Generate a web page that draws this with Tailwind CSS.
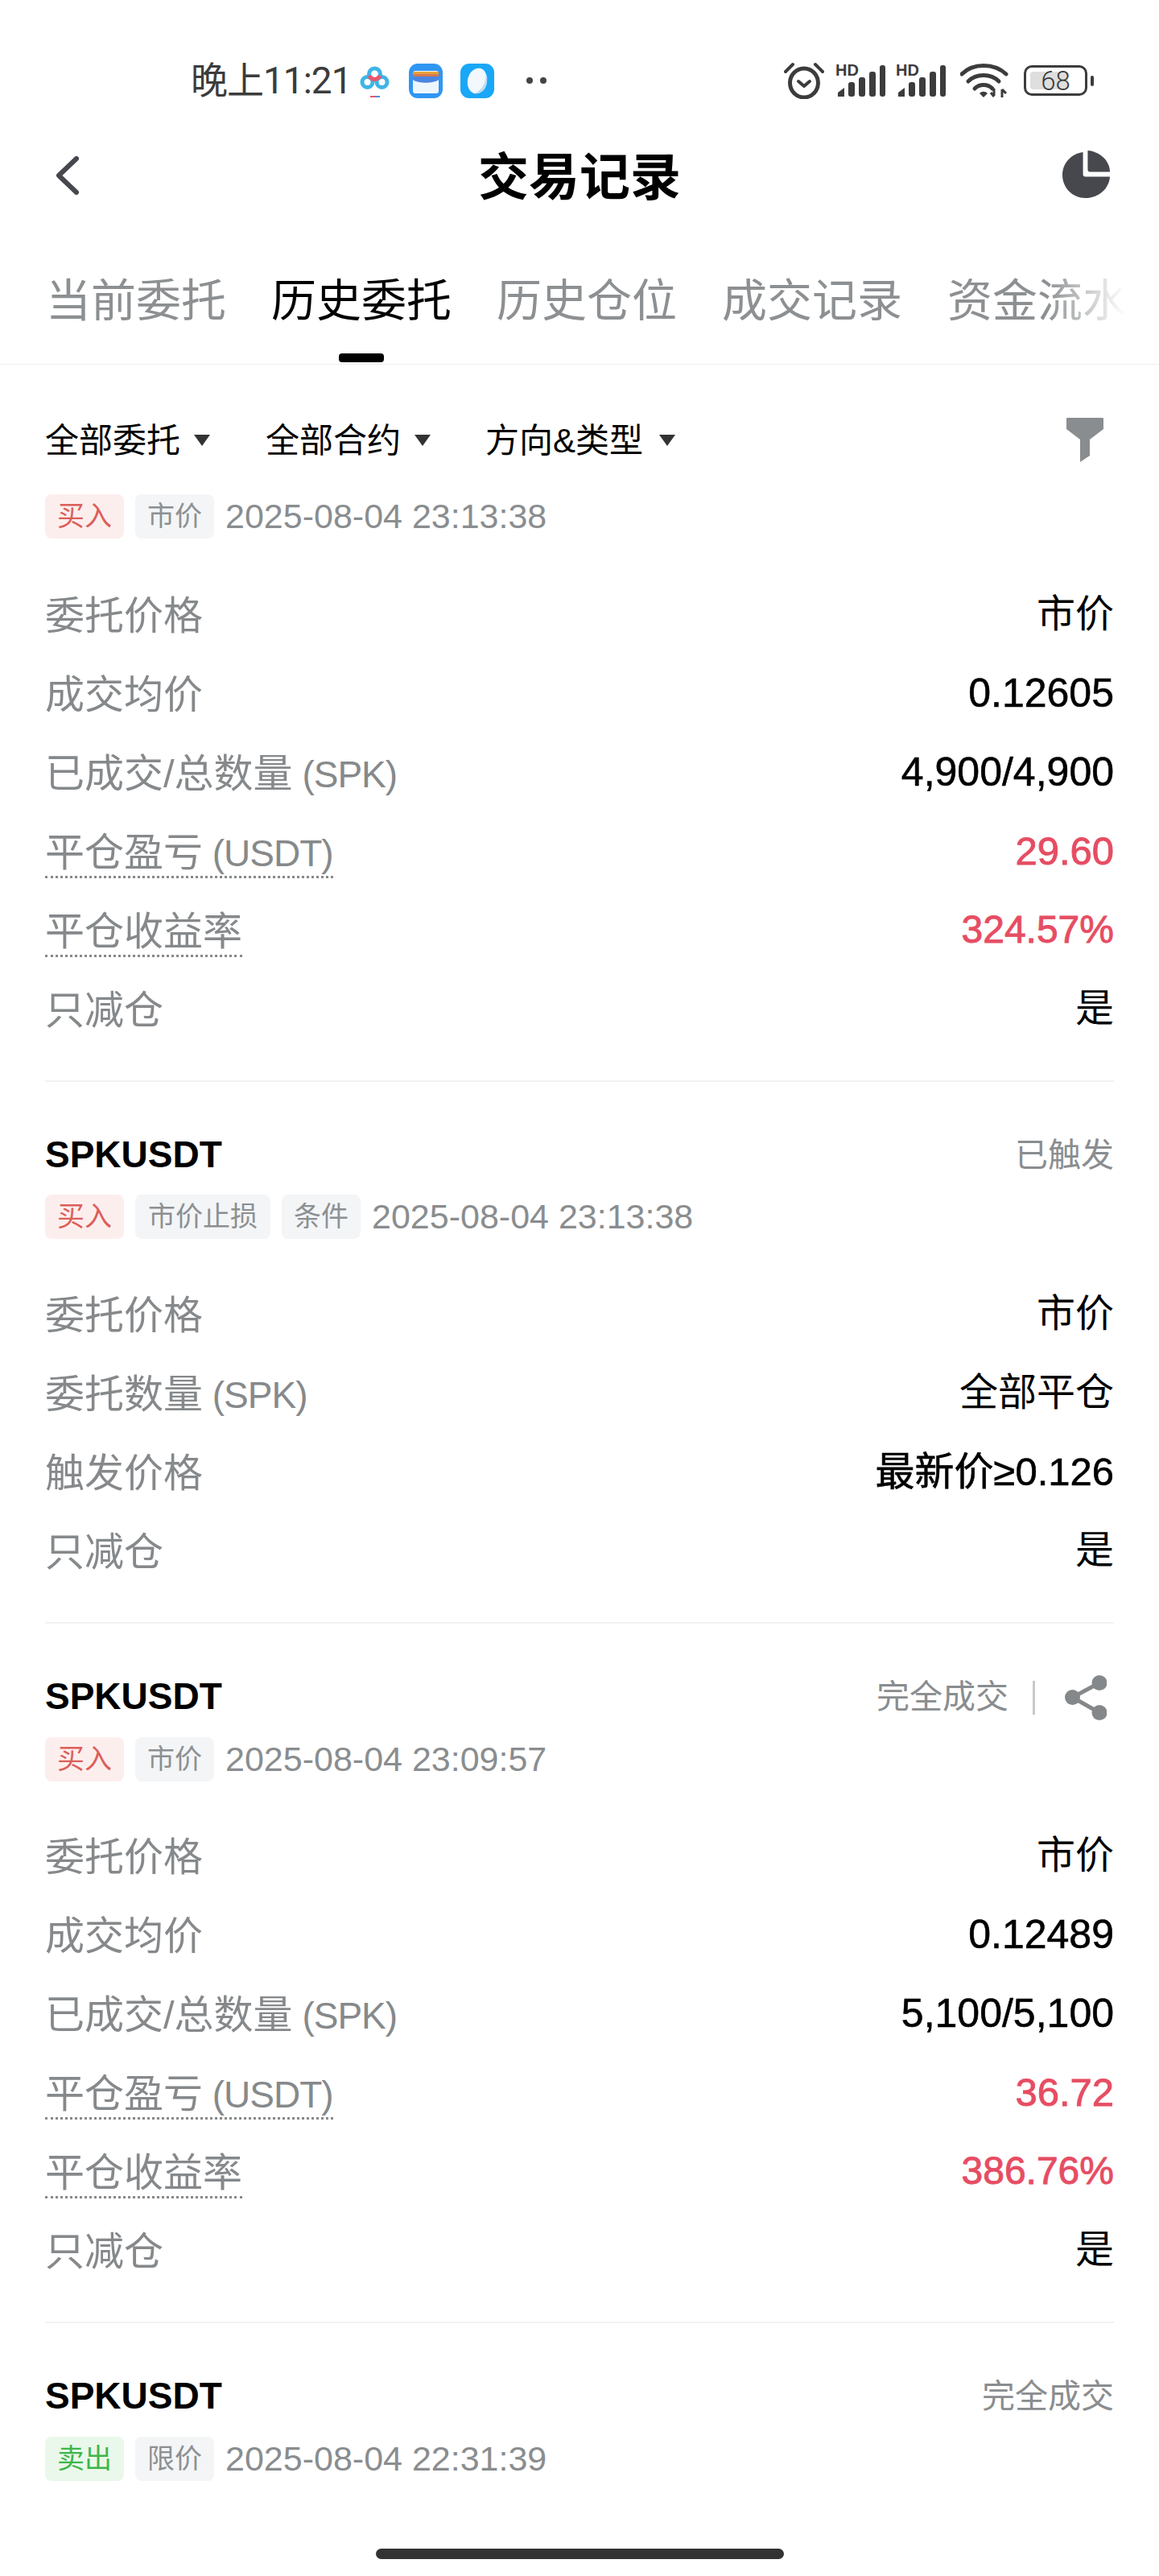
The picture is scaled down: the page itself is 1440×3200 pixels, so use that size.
<!DOCTYPE html>
<html lang="zh-CN">
<head>
    <meta charset="UTF-8">
    <meta name="viewport" content="width=device-width, initial-scale=1.0">
    <title>交易记录</title>
    <script src="https://cdn.jsdelivr.net/npm/@tailwindcss/browser@4"></script>
</head>
<body class="bg-white font-['Liberation_Sans','Noto_Sans_CJK_SC',sans-serif]">
<div class="relative w-[1440px] h-[3200px] overflow-hidden bg-white">

    <!-- status bar -->
    <div class="flex h-[160px] items-center pt-[40px] pl-[237px] pr-[81px] text-[#3c3c3c]">
        <span class="w-[192px] text-[46px] leading-none tracking-[-1px] whitespace-nowrap font-['Roboto','Noto_Sans_CJK_SC',sans-serif]">晚上11:21</span>
        <svg class="ml-[18px] w-[37px] h-[44px]" viewBox="0 0 37 44">
            <circle cx="9.500" cy="24" r="6.500" fill="none" stroke="#3fb4e6" stroke-width="5"/>
            <circle cx="27.500" cy="24" r="6.500" fill="none" stroke="#3fb4e6" stroke-width="5"/>
            <circle cx="18.500" cy="14" r="7" fill="none" stroke="#3fb4e6" stroke-width="5"/>
            <path d="M12 16a7 7 0 0 0 13 0" fill="none" stroke="#e8566f" stroke-width="5"/>
            <rect x="13" y="41" width="6" height="2" fill="#e8566f"/>
            <rect x="19" y="41" width="6" height="2" fill="#4a90e2"/>
        </svg>
        <svg class="ml-[24px] w-[42px] h-[43px]" viewBox="0 0 42 43">
            <rect width="42" height="43" rx="11" fill="#2f96f3"/>
            <rect x="5" y="9" width="32" height="28" rx="3" fill="#eef6fd"/>
            <rect x="5" y="10" width="32" height="3" fill="#e8a23c"/>
            <rect x="5" y="13" width="32" height="3" fill="#d9784a"/>
            <path d="M5 16h32v4c-6 5-26 5-32 0z" fill="#4a86e0"/>
        </svg>
        <svg class="ml-[22px] w-[42px] h-[43px]" viewBox="0 0 42 43">
            <rect width="42" height="43" rx="11" fill="#1aa7f7"/>
            <ellipse cx="21" cy="21.500" rx="12" ry="16" fill="#f2f8fc" transform="rotate(12 21 21.500)"/>
            <path d="M31 12c2 10-3 20-13 25 8 1 14-5 15-14 .3-4-.5-8-2-11z" fill="#bcdcf2"/>
        </svg>
        <div class="ml-[40px] flex gap-[9px]">
            <span class="w-[8px] h-[8px] rounded-full bg-[#444]"></span>
            <span class="w-[8px] h-[8px] rounded-full bg-[#444]"></span>
        </div>

        <div class="ml-auto flex items-center">
            <svg class="w-[50px] h-[46px]" viewBox="0 0 50 46" fill="none" stroke="#3c3c3c">
                <ellipse cx="25" cy="26" rx="17.500" ry="18" stroke-width="5"/>
                <path d="M18 24l7 6 7-6" stroke-width="4" stroke-linecap="round" stroke-linejoin="round"/>
                <path d="M2 12L11 3M48 12L39 3" stroke-width="4" stroke-linecap="round"/>
            </svg>
            <svg class="ml-[14px] w-[63px] h-[50px]" viewBox="0 -4 63 50" fill="#3c3c3c">
                <text x="0" y="15" font-size="20" font-weight="700" font-family="Liberation Sans">HD</text>
                <path d="M3 41v-5l8-6v11z"/>
                <rect x="16" y="23" width="8" height="18" rx="3"/>
                <rect x="29" y="17" width="8" height="24" rx="3"/>
                <rect x="42" y="10" width="8" height="31" rx="3"/>
                <rect x="55" y="2" width="7" height="39" rx="3"/>
            </svg>
            <svg class="ml-[12px] w-[63px] h-[50px]" viewBox="0 -4 63 50" fill="#3c3c3c">
                <text x="0" y="15" font-size="20" font-weight="700" font-family="Liberation Sans">HD</text>
                <path d="M3 41v-5l8-6v11z"/>
                <rect x="16" y="23" width="8" height="18" rx="3"/>
                <rect x="29" y="17" width="8" height="24" rx="3"/>
                <rect x="42" y="10" width="8" height="31" rx="3"/>
                <rect x="55" y="2" width="7" height="39" rx="3"/>
            </svg>
            <svg class="ml-[17px] w-[60px] h-[44px]" viewBox="0 0 60 44" fill="none" stroke="#3c3c3c" stroke-linecap="round">
                <path d="M2 14C16 0 42 0 57 14" stroke-width="5"/>
                <path d="M10 23C20 13 38 13 48 23" stroke-width="5"/>
                <path d="M18 32C24 26 34 26 40 32" stroke-width="5"/>
                <path d="M24 38l5 5 5-5c-3-3-7-3-10 0z" fill="#3c3c3c" stroke="none"/>
                <path d="M42 32v9M38 37l4 5M52 43v-10M52 33l5 5" stroke-width="3" stroke-linecap="butt"/>
            </svg>
            <div class="relative ml-[19px] flex h-[38px] w-[79px] items-center justify-center rounded-[10px] border-[3px] border-[#3c3c3c] text-[33px] leading-none">
                <span class="absolute left-[5px] top-[5px] bottom-[5px] w-[47px] rounded-[4px] bg-[#dedede]"></span>
                <span class="relative font-['Roboto',sans-serif] font-light">68</span>
            </div>
            <span class="ml-[4px] h-[13px] w-[4px] rounded-full bg-[#3c3c3c]"></span>
        </div>
    </div>

    <!-- title -->
    <div class="flex h-[116px] items-center justify-between pl-[68px] pr-[61px]">
        <div class="w-[60px]">
            <svg class="w-[32px] h-[48px]" viewBox="0 0 32 48" fill="none" stroke="#46484e" stroke-width="6" stroke-linecap="round" stroke-linejoin="round">
                <path d="M27 3L5 24l22 21"/>
            </svg>
        </div>
        <h1 class="text-[63px] font-bold leading-none text-black -translate-x-[4px] translate-y-[2px]">交易记录</h1>
        <svg class="w-[59px] h-[59px] -translate-y-[2px]" viewBox="0 0 60 60" fill="#46484e">
            <path d="M32 0c15 1 28 13 28 27H35a3 3 0 0 1-3-3z"/>
            <path d="M26 2v28a3 3 0 0 0 3 3h31c-1 15-14 27-31 27C13 60 0 47 0 31 0 16 11 4 26 2z"/>
        </svg>
    </div>

    <!-- tabs -->
    <div class="relative flex h-[177px] gap-[56px] overflow-hidden whitespace-nowrap border-b border-[#f0f0f0] pl-[57px] pt-[56px] text-[56px] leading-[84px] text-[#8d9092]">
        <div>当前委托</div>
        <div class="flex flex-col items-center text-black">
            <span>历史委托</span>
            <span class="mt-[23px] h-[11px] w-[56px] rounded-[4px] bg-black"></span>
        </div>
        <div>历史仓位</div>
        <div>成交记录</div>
        <div>资金流水</div>
        <div class="absolute right-0 top-0 h-full w-[140px] bg-gradient-to-r from-white/0 to-white to-70%"></div>
    </div>

    <div class="px-[56px]">
        <!-- filters -->
        <div class="mt-[54px] flex h-[80px] items-center text-[42px] text-black">
            <span class="w-[168px] whitespace-nowrap">全部委托</span>
            <svg class="ml-[17px] w-[20px] h-[14px]" viewBox="0 0 20 14"><path d="M0 0h20L10 14z" fill="#333"/></svg>
            <span class="ml-[69px] w-[168px] whitespace-nowrap">全部合约</span>
            <svg class="ml-[17px] w-[20px] h-[14px]" viewBox="0 0 20 14"><path d="M0 0h20L10 14z" fill="#333"/></svg>
            <span class="ml-[68px] w-[197px] whitespace-nowrap">方向&amp;类型</span>
            <svg class="ml-[19px] w-[20px] h-[14px]" viewBox="0 0 20 14"><path d="M0 0h20L10 14z" fill="#333"/></svg>
            <svg class="ml-auto mr-[12px] w-[48px] h-[56px]" viewBox="0 0 48 56"><path d="M2 0h44a1 1 0 0 1 1 1v13L30 27v20l-12 8V27L1 14V1a1 1 0 0 1 1-1z" fill="#8a8d8f"/></svg>
        </div>

        <!-- order 1 -->
        <div class="mt-[27px] flex h-[55px] items-center gap-[14px] text-[34px]">
            <span class="flex h-full w-[98px] items-center justify-center rounded-[8px] bg-[#fdeeee] text-[#dc5f59]">买入</span>
            <span class="flex h-full w-[98px] items-center justify-center rounded-[8px] bg-[#f3f5f7] text-[#8d9092]">市价</span>
            <span class="text-[43px] text-[#8a8d8f] whitespace-nowrap">2025-08-04 23:13:38</span>
        </div>
        <div class="mt-[47px] text-[49px] leading-[98px]">
            <div class="flex h-[98px] justify-between"><span class="text-[#86898b]">委托价格</span><span class="text-black text-[48px] leading-[94px]">市价</span></div>
            <div class="flex h-[98px] justify-between"><span class="text-[#86898b]">成交均价</span><span class="text-black text-[50px] leading-[94px] [-webkit-text-stroke:0.6px_black]">0.12605</span></div>
            <div class="flex h-[98px] justify-between"><span class="text-[#86898b]">已成交/总数量<span class="text-[46px] tracking-[-1px]"> (SPK)</span></span><span class="text-black text-[50px] leading-[94px] [-webkit-text-stroke:0.6px_black]">4,900/4,900</span></div>
            <div class="flex h-[98px] justify-between"><span class="text-[#86898b]"><span class="inline-block h-[64px] border-b-[3px] border-dotted border-[#86898b] leading-[64px]">平仓盈亏<span class="text-[46px] tracking-[-1px]"> (USDT)</span></span></span><span class="text-[#e64d63] text-[49px] leading-[94px] [-webkit-text-stroke:0.9px_#e64d63]">29.60</span></div>
            <div class="flex h-[98px] justify-between"><span class="text-[#86898b]"><span class="inline-block h-[64px] border-b-[3px] border-dotted border-[#86898b] leading-[64px]">平仓收益率</span></span><span class="text-[#e64d63] text-[48px] leading-[94px] [-webkit-text-stroke:0.9px_#e64d63]">324.57%</span></div>
            <div class="flex h-[98px] justify-between"><span class="text-[#86898b]">只减仓</span><span class="text-black text-[48px] leading-[94px]">是</span></div>
        </div>
        <div class="mt-[38px] h-[2px] bg-[#f2f2f2]"></div>

        <!-- order 2 -->
        <div class="mt-[60px] flex h-[60px] items-center justify-between">
            <span class="text-[46px] font-bold text-black">SPKUSDT</span>
            <span class="mt-[3px] text-[41px] text-[#8a8d8f]">已触发</span>
        </div>
        <div class="mt-[20px] flex h-[55px] items-center gap-[14px] text-[34px]">
            <span class="flex h-full w-[98px] items-center justify-center rounded-[8px] bg-[#fdeeee] text-[#dc5f59]">买入</span>
            <span class="flex h-full w-[168px] items-center justify-center rounded-[8px] bg-[#f3f5f7] text-[#8d9092]">市价止损</span>
            <span class="flex h-full w-[98px] items-center justify-center rounded-[8px] bg-[#f3f5f7] text-[#8d9092]">条件</span>
            <span class="text-[43px] text-[#8a8d8f] whitespace-nowrap">2025-08-04 23:13:38</span>
        </div>
        <div class="mt-[46px] text-[49px] leading-[98px]">
            <div class="flex h-[98px] justify-between"><span class="text-[#86898b]">委托价格</span><span class="text-black text-[48px] leading-[94px]">市价</span></div>
            <div class="flex h-[98px] justify-between"><span class="text-[#86898b]">委托数量<span class="text-[46px] tracking-[-1px]"> (SPK)</span></span><span class="text-black text-[48px] leading-[94px]">全部平仓</span></div>
            <div class="flex h-[98px] justify-between"><span class="text-[#86898b]">触发价格</span><span class="text-black text-[49px] leading-[94px] [-webkit-text-stroke:0.6px_black]">最新价≥0.126</span></div>
            <div class="flex h-[98px] justify-between"><span class="text-[#86898b]">只减仓</span><span class="text-black text-[48px] leading-[94px]">是</span></div>
        </div>
        <div class="mt-[38px] h-[2px] bg-[#f2f2f2]"></div>

        <!-- order 3 -->
        <div class="mt-[60px] flex h-[60px] items-center">
            <span class="text-[46px] font-bold text-black">SPKUSDT</span>
            <span class="ml-auto mt-[3px] text-[41px] text-[#8a8d8f]">完全成交</span>
            <span class="ml-[30px] mt-[3px] h-[42px] w-[3px] bg-[#c8c8c8]"></span>
            <svg class="ml-[37px] mr-[9px] mt-[4px] w-[52px] h-[56px]" viewBox="0 0 52 56" fill="#85888a" stroke="#85888a">
                <path d="M43 9.500L9.500 27.500L43 46.500" fill="none" stroke-width="5"/>
                <circle cx="43" cy="9.500" r="9.500" stroke="none"/>
                <circle cx="9.500" cy="27.500" r="9.500" stroke="none"/>
                <circle cx="43" cy="46.500" r="9.500" stroke="none"/>
            </svg>
        </div>
        <div class="mt-[21px] flex h-[55px] items-center gap-[14px] text-[34px]">
            <span class="flex h-full w-[98px] items-center justify-center rounded-[8px] bg-[#fdeeee] text-[#dc5f59]">买入</span>
            <span class="flex h-full w-[98px] items-center justify-center rounded-[8px] bg-[#f3f5f7] text-[#8d9092]">市价</span>
            <span class="text-[43px] text-[#8a8d8f] whitespace-nowrap">2025-08-04 23:09:57</span>
        </div>
        <div class="mt-[45px] text-[49px] leading-[98px]">
            <div class="flex h-[98px] justify-between"><span class="text-[#86898b]">委托价格</span><span class="text-black text-[48px] leading-[94px]">市价</span></div>
            <div class="flex h-[98px] justify-between"><span class="text-[#86898b]">成交均价</span><span class="text-black text-[50px] leading-[94px] [-webkit-text-stroke:0.6px_black]">0.12489</span></div>
            <div class="flex h-[98px] justify-between"><span class="text-[#86898b]">已成交/总数量<span class="text-[46px] tracking-[-1px]"> (SPK)</span></span><span class="text-black text-[50px] leading-[94px] [-webkit-text-stroke:0.6px_black]">5,100/5,100</span></div>
            <div class="flex h-[98px] justify-between"><span class="text-[#86898b]"><span class="inline-block h-[64px] border-b-[3px] border-dotted border-[#86898b] leading-[64px]">平仓盈亏<span class="text-[46px] tracking-[-1px]"> (USDT)</span></span></span><span class="text-[#e64d63] text-[49px] leading-[94px] [-webkit-text-stroke:0.9px_#e64d63]">36.72</span></div>
            <div class="flex h-[98px] justify-between"><span class="text-[#86898b]"><span class="inline-block h-[64px] border-b-[3px] border-dotted border-[#86898b] leading-[64px]">平仓收益率</span></span><span class="text-[#e64d63] text-[48px] leading-[94px] [-webkit-text-stroke:0.9px_#e64d63]">386.76%</span></div>
            <div class="flex h-[98px] justify-between"><span class="text-[#86898b]">只减仓</span><span class="text-black text-[48px] leading-[94px]">是</span></div>
        </div>
        <div class="mt-[38px] h-[2px] bg-[#f2f2f2]"></div>

        <!-- order 4 -->
        <div class="mt-[60px] flex h-[60px] items-center justify-between">
            <span class="text-[46px] font-bold text-black">SPKUSDT</span>
            <span class="mt-[3px] text-[41px] text-[#8a8d8f]">完全成交</span>
        </div>
        <div class="mt-[21px] flex h-[55px] items-center gap-[14px] text-[34px]">
            <span class="flex h-full w-[98px] items-center justify-center rounded-[8px] bg-[#e9f8ea] text-[#3fb54a]">卖出</span>
            <span class="flex h-full w-[98px] items-center justify-center rounded-[8px] bg-[#f3f5f7] text-[#8d9092]">限价</span>
            <span class="text-[43px] text-[#8a8d8f] whitespace-nowrap">2025-08-04 22:31:39</span>
        </div>
    </div>

    <!-- home indicator -->
    <div class="absolute bottom-[21px] left-[467px] h-[13px] w-[507px] rounded-full bg-[#333]"></div>
</div>
</body>
</html>
